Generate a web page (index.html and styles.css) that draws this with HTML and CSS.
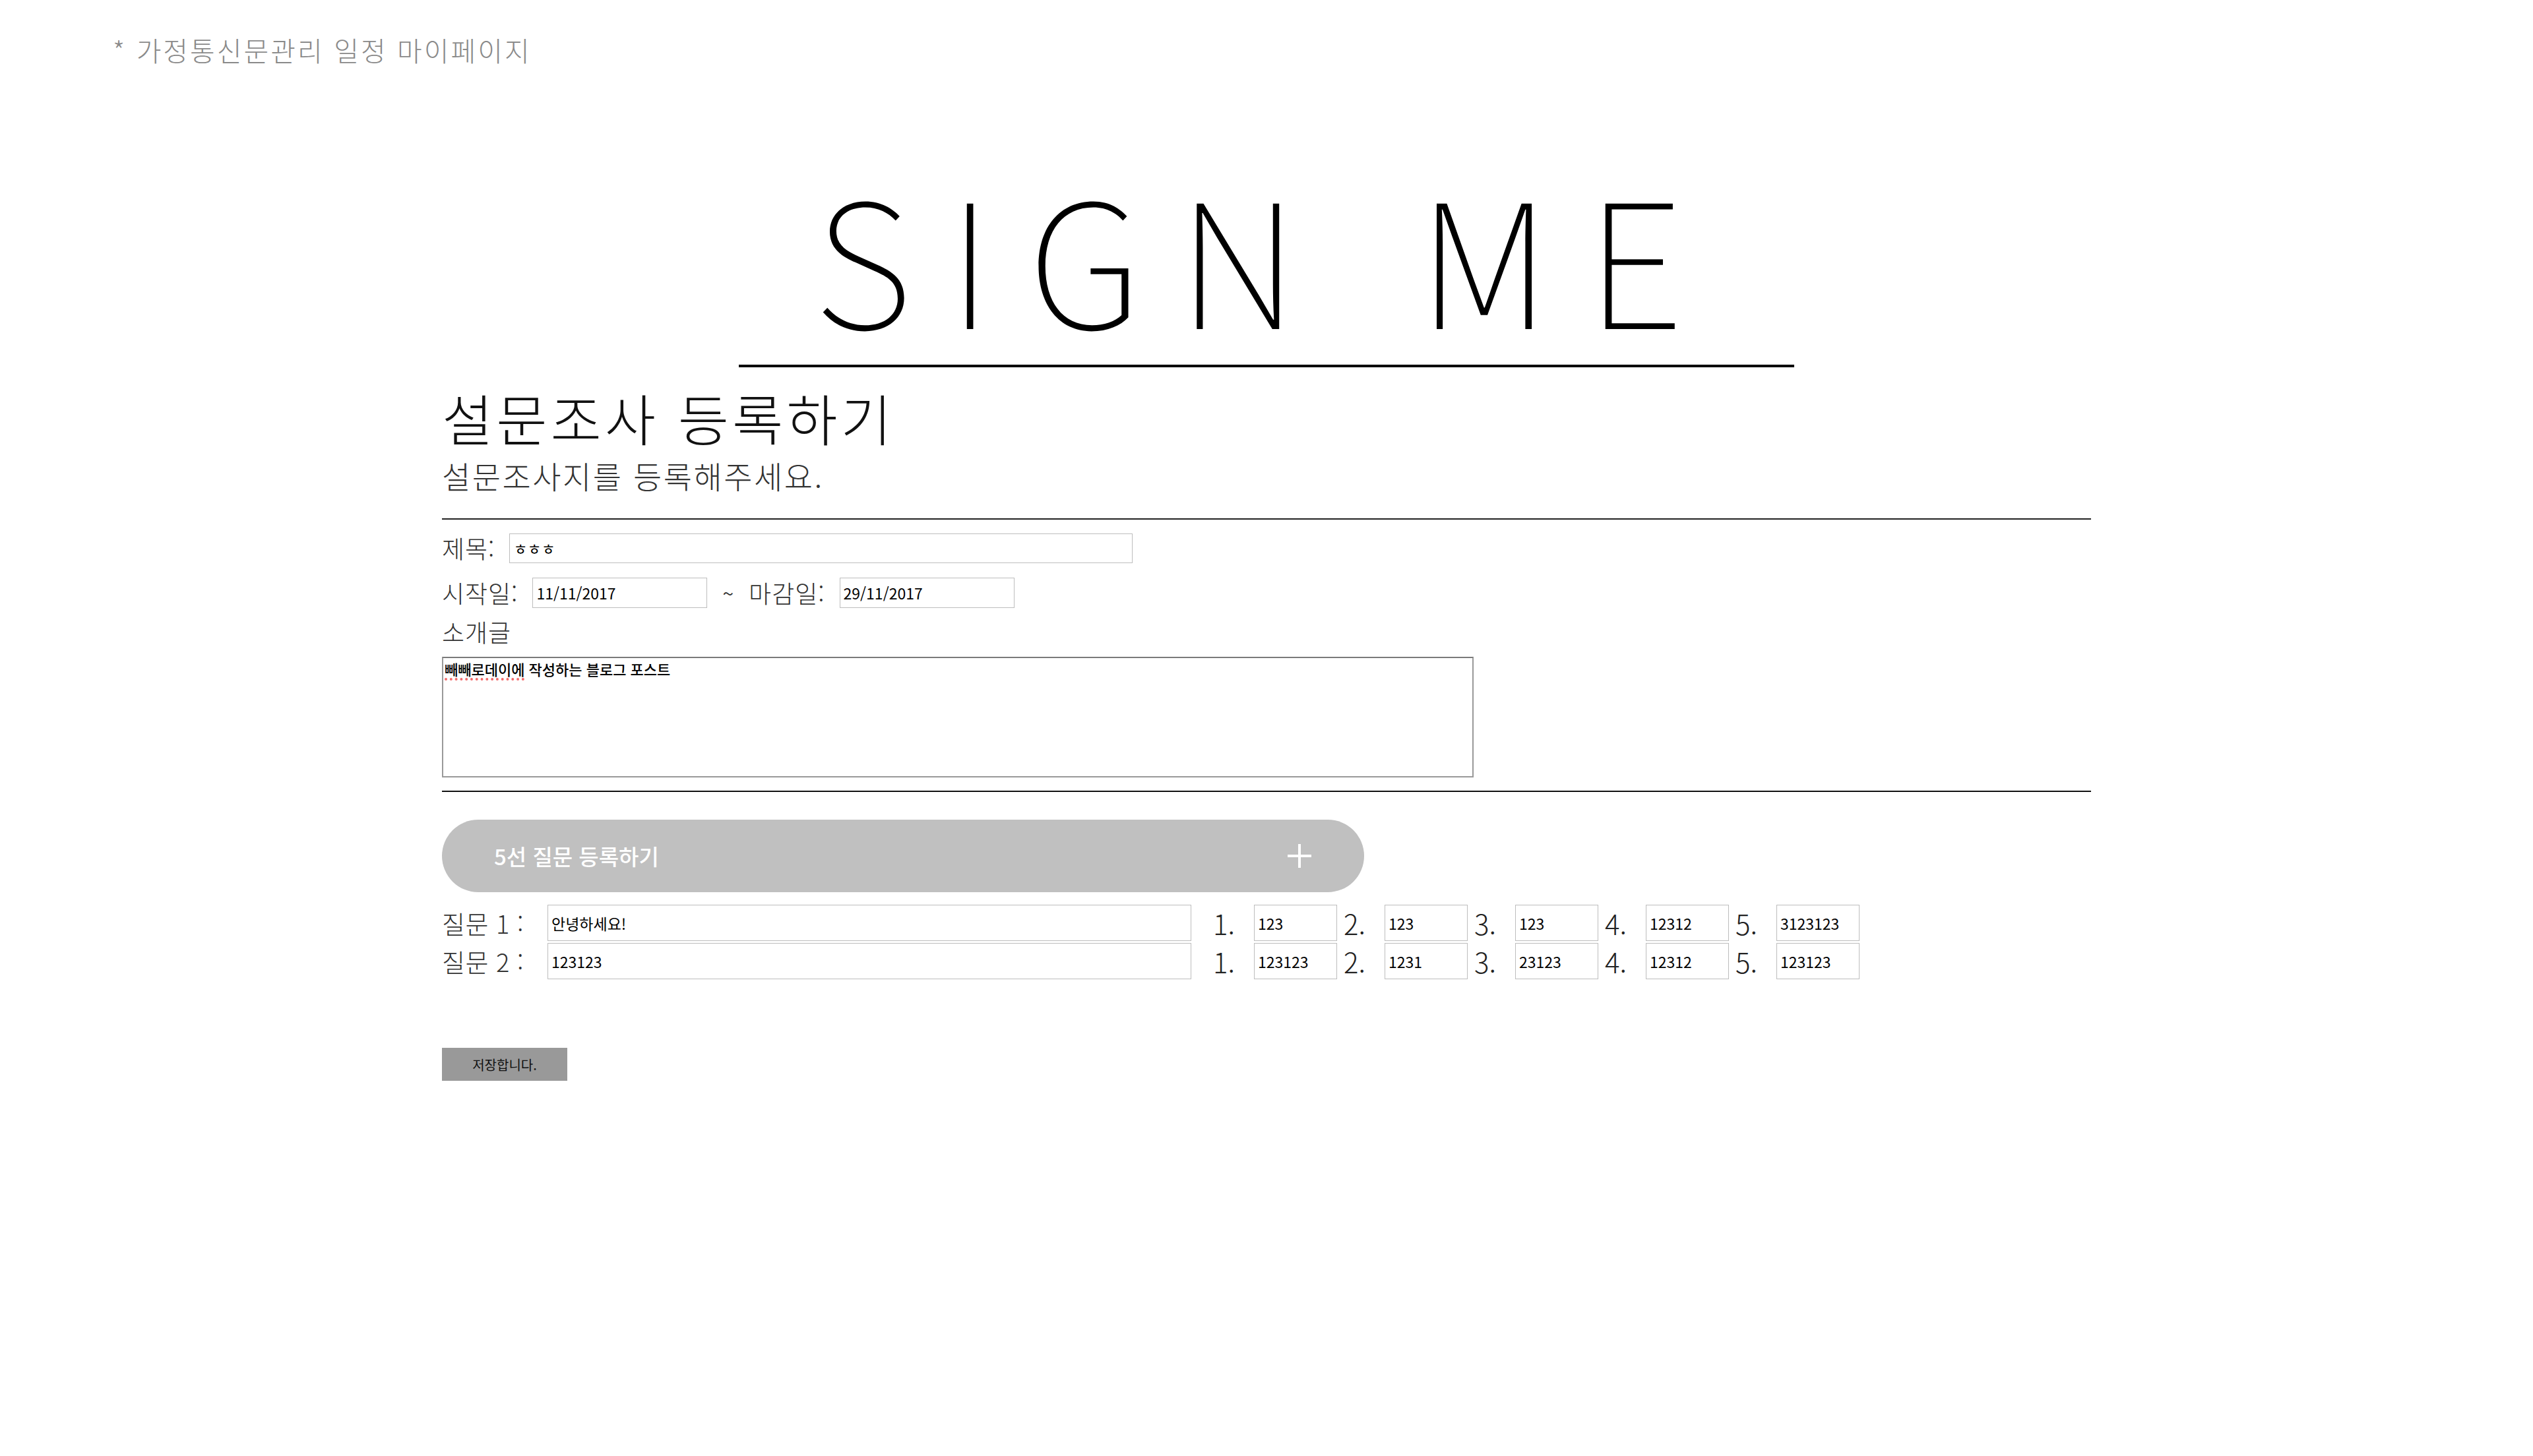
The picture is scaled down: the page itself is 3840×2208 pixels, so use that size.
FILE: index.html
```html
<!DOCTYPE html>
<html lang="ko">
<head>
<meta charset="utf-8">
<title>SIGN ME - 설문조사 등록하기</title>
<link rel="stylesheet" href="styles.css">
</head>
<body>
<div class="crumb">* 가정통신문관리 일정 마이페이지</div>
<main class="page">
  <header class="brand">
    <h1 class="brand-title">SIGN ME</h1>
  </header>
  <section class="intro">
    <h2 class="intro-title">설문조사 등록하기</h2>
    <p class="intro-sub">설문조사지를 등록해주세요.</p>
  </section>
  <form class="survey">
    <div class="basic">
      <div class="row">
        <label class="lbl">제목:</label>
        <input class="inp inp-title" type="text" value="ㅎㅎㅎ">
      </div>
      <div class="row">
        <label class="lbl">시작일:</label>
        <input class="inp inp-date" type="text" value="11/11/2017">
        <span class="tilde">~</span>
        <label class="lbl">마감일:</label>
        <input class="inp inp-date" type="text" value="29/11/2017">
      </div>
      <div class="row row-intro">
        <label class="lbl">소개글</label>
      </div>
      <div class="textbox"><span class="typo">빼빼로데이에</span> 작성하는 블로그 포스트</div>
    </div>
    <button type="button" class="add-btn">
      <span class="add-text">5선 질문 등록하기</span>
      <svg class="add-icon" viewBox="0 0 36 36" width="36" height="36"><path d="M18 0V36M0 18H36" stroke="#fff" stroke-width="4" fill="none"/></svg>
    </button>
    <div class="questions">
      <div class="q-row">
        <label class="q-lbl">질문 1 :</label>
        <input class="inp q-inp" type="text" value="안녕하세요!">
        <div class="opts">
          <span class="num">1.</span><input class="inp opt" type="text" value="123">
          <span class="num">2.</span><input class="inp opt" type="text" value="123">
          <span class="num">3.</span><input class="inp opt" type="text" value="123">
          <span class="num">4.</span><input class="inp opt" type="text" value="12312">
          <span class="num">5.</span><input class="inp opt" type="text" value="3123123">
        </div>
      </div>
      <div class="q-row">
        <label class="q-lbl">질문 2 :</label>
        <input class="inp q-inp" type="text" value="123123">
        <div class="opts">
          <span class="num">1.</span><input class="inp opt" type="text" value="123123">
          <span class="num">2.</span><input class="inp opt" type="text" value="1231">
          <span class="num">3.</span><input class="inp opt" type="text" value="23123">
          <span class="num">4.</span><input class="inp opt" type="text" value="12312">
          <span class="num">5.</span><input class="inp opt" type="text" value="123123">
        </div>
      </div>
    </div>
    <button type="button" class="save">저장합니다.</button>
  </form>
</main>
</body>
</html>
```

FILE: styles.css
```css
* { box-sizing: border-box; }

html, body {
  margin: 0;
  padding: 0;
  background: #fff;
}

body {
  font-family: "Noto Sans CJK KR", "Noto Sans", sans-serif;
  color: #222;
}

.crumb {
  padding: 47px 0 0 171px;
  height: 120px;
  font-size: 41px;
  line-height: 56px;
  font-weight: 300;
  letter-spacing: 3px;
  color: #8a8a8a;
}

.page {
  width: 2500px;
  margin: 0 auto;
}

.brand {
  width: 1600px;
  margin: 0 auto;
  border-bottom: 4px solid #000;
  height: 437px;
  padding-top: 134px;
}

.brand-title {
  margin: 0;
  text-align: center;
  white-space: nowrap;
  font-family: "Noto Sans CJK KR", "Noto Sans", sans-serif;
  font-weight: 100;
  font-size: 262px;
  line-height: 262px;
  letter-spacing: 54px;
  color: #000;
}

.intro {
  padding-top: 30px;
  border-bottom: 2px solid #222;
  padding-bottom: 38px;
}

.intro-title {
  margin: 0;
  font-size: 84px;
  line-height: 92px;
  font-weight: 300;
  letter-spacing: 5px;
  color: #111;
}

.intro-sub {
  margin: 15px 0 0;
  font-size: 47px;
  line-height: 54px;
  font-weight: 300;
  letter-spacing: 2.5px;
  color: #333;
}

.survey {
  display: block;
}

.basic {
  padding-top: 20px;
  padding-bottom: 20px;
  border-bottom: 2px solid #111;
}

.row {
  display: flex;
  align-items: center;
  gap: 22px;
  height: 46px;
  margin-bottom: 22px;
}

.row-intro {
  margin-top: -9px;
  margin-bottom: 15px;
}

.lbl {
  font-size: 37px;
  font-weight: 300;
  letter-spacing: 1px;
  color: #333;
  line-height: 46px;
}

.inp {
  font-family: "Noto Sans CJK KR", "Noto Sans", sans-serif;
  font-size: 23px;
  color: #000;
  border: 1px solid #bdbdbd;
  background: #fff;
  padding: 0 5px;
  margin: 0;
  outline: none;
  font-weight: 400;
}

.inp-title {
  width: 945px;
  height: 45px;
}

.inp-date {
  width: 265px;
  height: 46px;
  font-size: 23px;
  font-weight: 400;
}

.tilde {
  font-size: 30px;
  color: #333;
  margin: 0 1px;
}

.textbox {
  width: 1564px;
  height: 183px;
  border: 2px solid #999;
  border-top-color: #7a7a7a;
  padding: 2px 2px;
  font-size: 22px;
  line-height: 28px;
  font-weight: 500;
  color: #000;
}

.typo {
  text-decoration: underline dotted #f36a6a;
  text-decoration-thickness: 4px;
  text-underline-offset: 4px;
}

.add-btn {
  display: flex;
  align-items: center;
  justify-content: space-between;
  width: 1398px;
  height: 110px;
  margin-top: 42px;
  padding: 0 80px 0 79px;
  border: none;
  border-radius: 55px;
  background: #c0c0c0;
  cursor: pointer;
}

.add-text {
  font-family: "Noto Sans CJK KR", "Noto Sans", sans-serif;
  font-size: 33px;
  font-weight: 500;
  color: #fff;
}

.questions {
  padding-top: 19px;
  display: flex;
  flex-direction: column;
  gap: 3px;
}

.q-row {
  display: flex;
  align-items: center;
  height: 55px;
}

.q-lbl {
  width: 160px;
  font-size: 38px;
  font-weight: 300;
  color: #333;
  letter-spacing: 0.5px;
}

.q-inp {
  width: 976px;
  height: 55px;
}

.opts {
  display: flex;
  align-items: center;
  margin-left: 33px;
}

.num {
  width: 62px;
  font-family: "Noto Sans CJK KR", "Lato", sans-serif;
  font-size: 42px;
  font-weight: 200;
  color: #222;
}

.opt {
  width: 126px;
  height: 55px;
  margin-right: 10px;
}

.save {
  display: block;
  margin-top: 104px;
  width: 190px;
  height: 50px;
  border: none;
  background: #999;
  font-family: "Noto Sans CJK KR", sans-serif;
  font-size: 20px;
  color: #111;
  padding: 0;
}
```
